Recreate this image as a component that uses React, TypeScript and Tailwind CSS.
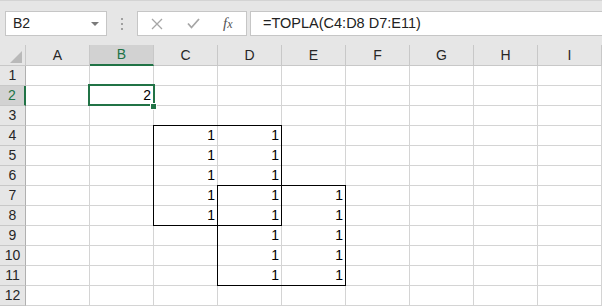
import React from "react"

const COLS = ["A", "B", "C", "D", "E", "F", "G", "H", "I"]
const ROWS = [1, 2, 3, 4, 5, 6, 7, 8, 9, 10, 11, 12]

// cell values, keyed like "C4"
const DATA: Record<string, string> = { B2: "2" }
for (const r of [4, 5, 6, 7, 8]) DATA[`C${r}`] = "1"
for (const r of [4, 5, 6, 7, 8, 9, 10, 11]) DATA[`D${r}`] = "1"
for (const r of [7, 8, 9, 10, 11]) DATA[`E${r}`] = "1"

const SEL_COL = "B"
const SEL_ROW = 2

function Cross() {
  return (
    <svg width="12" height="12" viewBox="0 0 12 12" fill="none" stroke="#a6a6a6" strokeWidth="1.3">
      <path d="M1 1 L11 11 M11 1 L1 11" />
    </svg>
  )
}

function Check() {
  return (
    <svg width="13" height="11" viewBox="0 0 13 11" fill="none" stroke="#a6a6a6" strokeWidth="1.8">
      <path d="M1 5.5 L4.5 9.5 L12 1" />
    </svg>
  )
}

function FormulaBar() {
  return (
    <div className="h-[45px] bg-[#e6e6e6] border-t border-[#d4d4d4] flex items-start pt-[10px]">
      {/* Name box */}
      <div className="ml-[5px] w-[102px] h-[25px] bg-white border border-[#c6c6c6] flex items-center pl-[7px] pr-[7px] text-[14px] text-[#222]">
        <span>B2</span>
        <span className="ml-auto w-0 h-0 border-l-[4px] border-r-[4px] border-t-[4px] border-l-transparent border-r-transparent border-t-[#7a7a7a]" />
      </div>

      {/* Grip */}
      <div className="w-[30px] h-[25px] flex flex-col items-center justify-center gap-[3px]">
        <span className="w-[2px] h-[2px] bg-[#a0a0a0]" />
        <span className="w-[2px] h-[2px] bg-[#a0a0a0]" />
        <span className="w-[2px] h-[2px] bg-[#a0a0a0]" />
      </div>

      {/* Cancel / enter / fx */}
      <div className="w-[110px] h-[25px] bg-white border border-[#c6c6c6] flex items-center pl-[13px]">
        <Cross />
        <span className="ml-[24px]"><Check /></span>
        <span className="ml-[23px] font-['Liberation_Serif'] italic text-[15px] text-[#555] leading-none">
          f<span className="text-[12px]">x</span>
        </span>
      </div>

      {/* Formula input */}
      <div className="ml-[3px] flex-1 -mr-[2px] h-[25px] bg-white border border-[#c6c6c6] flex items-center pl-[12px] text-[14.5px] text-[#222]">
        =TOPLA(C4:D8 D7:E11)
      </div>
    </div>
  )
}

function Sheet() {
  return (
    <div className="relative grid grid-cols-[26px_repeat(9,64px)] grid-rows-[21px_repeat(12,20px)] text-[14px]">
      {/* Corner */}
      <div className="bg-[#e6e6e6] border-r border-b border-[#c8c8c8] flex items-end justify-end pr-[3px] pb-[2px]">
        <svg width="12" height="12" viewBox="0 0 12 12">
          <path d="M12 0 L12 12 L0 12 Z" fill="#b9b9b9" />
        </svg>
      </div>

      {/* Column headers */}
      {COLS.map(c => (
        <div
          key={c}
          className={`flex items-center justify-center border-r border-[#c8c8c8] ${
            c === SEL_COL
              ? "bg-[#d2d2d2] text-[#217346] border-b-2 border-b-[#217346]"
              : "bg-[#e6e6e6] text-[#262626] border-b border-b-[#c8c8c8]"
          }`}
        >
          {c}
        </div>
      ))}

      {ROWS.map(r => (
        <React.Fragment key={r}>
          <div
            className={`flex items-center justify-center border-b border-[#c8c8c8] ${
              r === SEL_ROW
                ? "bg-[#d2d2d2] text-[#217346] border-r-2 border-r-[#217346]"
                : "bg-[#e6e6e6] text-[#262626] border-r border-r-[#b0b0b0]"
            }`}
          >
            {r}
          </div>
          {COLS.map(c => (
            <div
              key={c}
              className="bg-white border-r border-b border-[#d4d4d4] flex items-center justify-end pr-[2px] text-black"
            >
              {DATA[`${c}${r}`] ?? ""}
            </div>
          ))}
        </React.Fragment>
      ))}

      {/* Cell borders C4:D8 and D7:E11 */}
      <div className="absolute left-[153px] top-[80px] w-[129px] h-[101px] border border-black pointer-events-none" />
      <div className="absolute left-[217px] top-[140px] w-[129px] h-[101px] border border-black pointer-events-none" />

      {/* Active cell B2 */}
      <div className="absolute left-[88px] top-[39px] w-[67px] h-[22px] border-2 border-[#217346] pointer-events-none" />
      <div className="absolute left-[150px] top-[58px] w-[7px] h-[7px] bg-[#217346] border border-white pointer-events-none" />
    </div>
  )
}

export default function App() {
  return (
    <div className="w-[602px] h-[306px] overflow-hidden bg-white font-['Liberation_Sans',Arial,sans-serif]">
      <FormulaBar />
      <Sheet />
    </div>
  )
}
